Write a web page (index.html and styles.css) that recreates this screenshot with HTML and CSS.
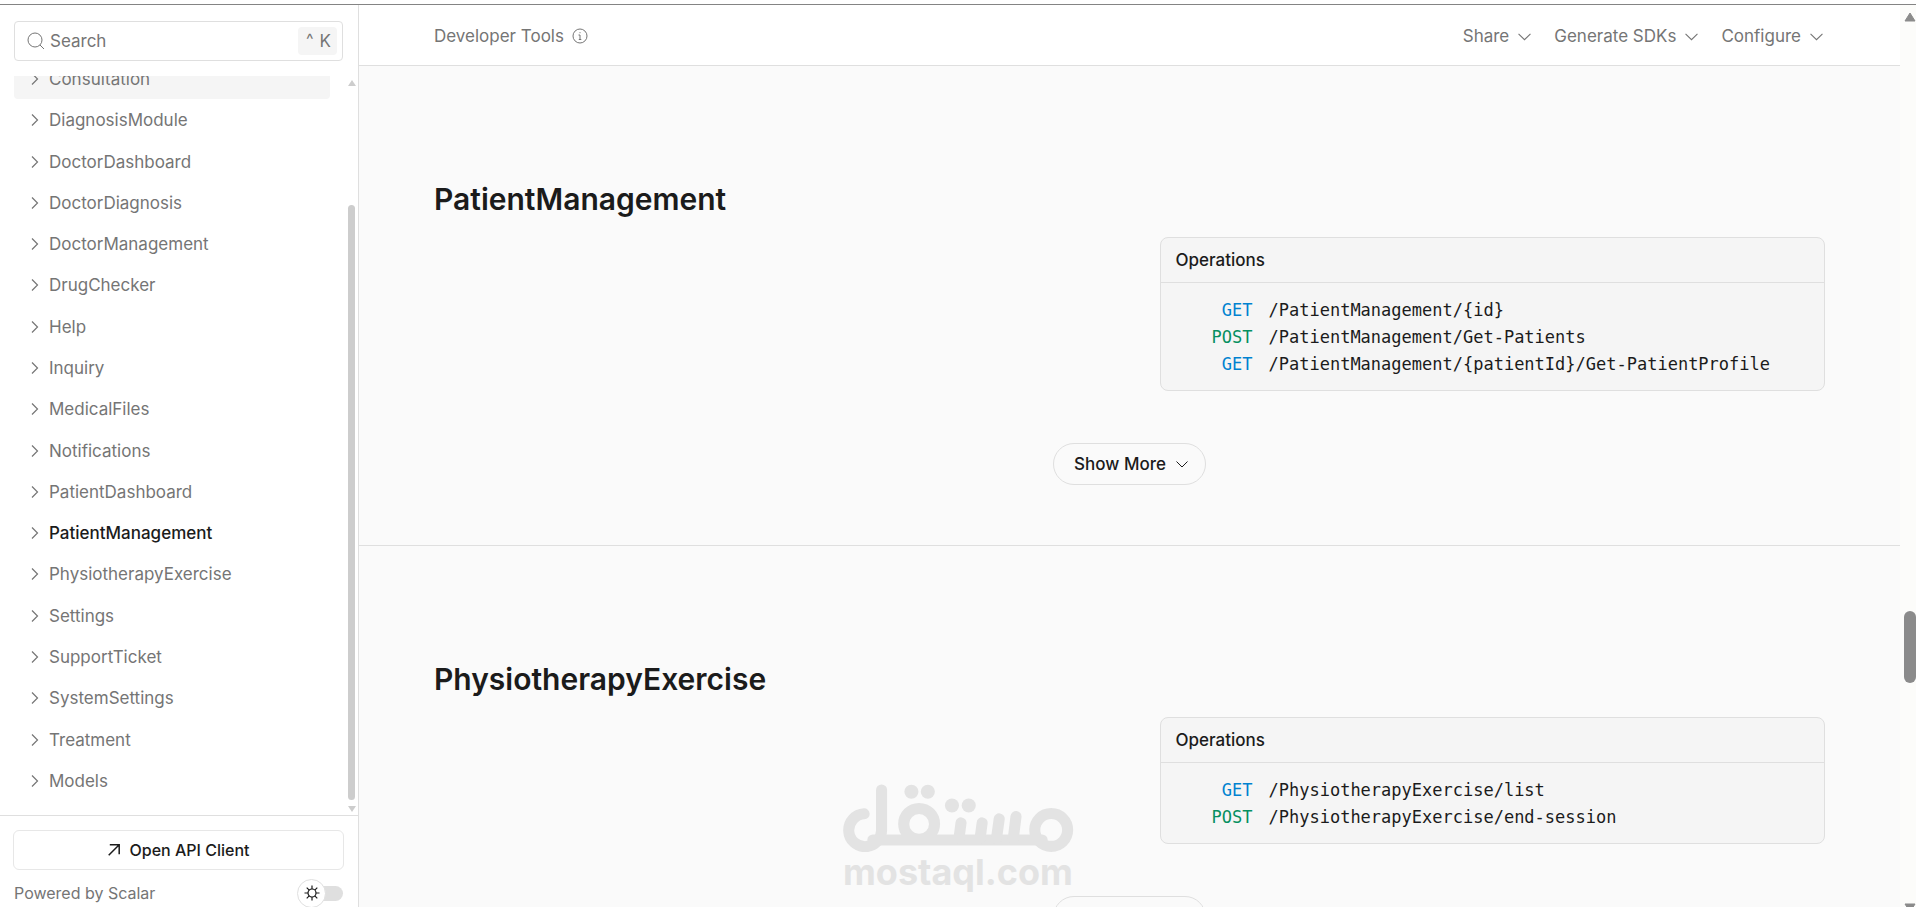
FILE: index.html
```
<!DOCTYPE html>
<html lang="en">
<head>
    <meta charset="UTF-8">
    <meta name="viewport" content="width=device-width, initial-scale=1.0">
    <title>API Reference</title>
    <link rel="stylesheet" href="styles.css">
</head>
<body>
    <!-- Shared icons -->
    <svg class="sprite" aria-hidden="true">
        <symbol id="chevron-right" viewBox="0 0 12 12"><path d="M3 .5l5.500 5.500L3 11.500"/></symbol>
        <symbol id="chevron-down" viewBox="0 0 12 12"><path d="M.5 3.500L6 9l5.500-5.500"/></symbol>
    </svg>

    <div class="layout">
        <aside class="sidebar">
            <div class="search">
                <svg class="search-icon" viewBox="0 0 18 18"><circle cx="8" cy="8" r="7"/><path d="M13 13l4 4"/></svg>
                <input type="text" id="search" placeholder="Search" aria-label="Search">
                <kbd><span class="caret">^</span>K</kbd>
            </div>

            <div class="nav-wrap">
                <nav>
                    <ul class="nav-list">
                        <li><a class="hovered" href="#consultation"><svg><use href="#chevron-right"/></svg>Consultation</a></li>
                        <li><a href="#diagnosis-module"><svg><use href="#chevron-right"/></svg>DiagnosisModule</a></li>
                        <li><a href="#doctor-dashboard"><svg><use href="#chevron-right"/></svg>DoctorDashboard</a></li>
                        <li><a href="#doctor-diagnosis"><svg><use href="#chevron-right"/></svg>DoctorDiagnosis</a></li>
                        <li><a href="#doctor-management"><svg><use href="#chevron-right"/></svg>DoctorManagement</a></li>
                        <li><a href="#drug-checker"><svg><use href="#chevron-right"/></svg>DrugChecker</a></li>
                        <li><a href="#help"><svg><use href="#chevron-right"/></svg>Help</a></li>
                        <li><a href="#inquiry"><svg><use href="#chevron-right"/></svg>Inquiry</a></li>
                        <li><a href="#medical-files"><svg><use href="#chevron-right"/></svg>MedicalFiles</a></li>
                        <li><a href="#notifications"><svg><use href="#chevron-right"/></svg>Notifications</a></li>
                        <li><a href="#patient-dashboard"><svg><use href="#chevron-right"/></svg>PatientDashboard</a></li>
                        <li><a class="active" href="#patient-management"><svg><use href="#chevron-right"/></svg>PatientManagement</a></li>
                        <li><a href="#physiotherapy-exercise"><svg><use href="#chevron-right"/></svg>PhysiotherapyExercise</a></li>
                        <li><a href="#settings"><svg><use href="#chevron-right"/></svg>Settings</a></li>
                        <li><a href="#support-ticket"><svg><use href="#chevron-right"/></svg>SupportTicket</a></li>
                        <li><a href="#system-settings"><svg><use href="#chevron-right"/></svg>SystemSettings</a></li>
                        <li><a href="#treatment"><svg><use href="#chevron-right"/></svg>Treatment</a></li>
                        <li><a href="#models"><svg><use href="#chevron-right"/></svg>Models</a></li>
                    </ul>
                </nav>
                <div class="nav-scroll">
                    <svg viewBox="0 0 8 6"><path d="M4 0l4 6H0z"/></svg>
                    <div class="nav-thumb"></div>
                    <svg viewBox="0 0 8 6"><path d="M4 6l4-6H0z"/></svg>
                </div>
            </div>

            <div class="sidebar-footer">
                <button type="button" class="client-btn">
                    <svg viewBox="0 0 12 12"><path d="M.7 11.300L11.200.8M1.800.8h9.400v9.400"/></svg>
                    Open API Client
                </button>
                <div class="footer-row">
                    <a href="#scalar">Powered by Scalar</a>
                    <label class="theme-toggle">
                        <input type="checkbox" aria-label="Dark mode">
                        <span class="knob">
                            <svg viewBox="0 0 16 16"><circle cx="8" cy="8" r="4"/><path d="M8 .5V4M8 12v3.500M.5 8H4M12 8h3.500M2.700 2.700l2.500 2.500M10.800 10.800l2.500 2.500M2.700 13.300l2.500-2.500M10.800 5.200l2.500-2.500"/></svg>
                        </span>
                    </label>
                </div>
            </div>
        </aside>

        <div class="main">
            <header class="toolbar">
                <div class="toolbar-title">
                    Developer Tools
                    <svg viewBox="0 0 16 16"><circle cx="8" cy="8" r="7"/><path d="M6.500 7H8v4.500M6.800 11.500h2.500M7.500 4.700h1"/></svg>
                </div>
                <div class="toolbar-menu">
                    <button type="button">Share <svg><use href="#chevron-down"/></svg></button>
                    <button type="button">Generate SDKs <svg><use href="#chevron-down"/></svg></button>
                    <button type="button">Configure <svg><use href="#chevron-down"/></svg></button>
                </div>
            </header>

            <main class="content">
                <section class="section" id="patient-management">
                    <h2>PatientManagement</h2>
                    <div class="columns">
                        <div class="card">
                            <h3>Operations</h3>
                            <ul class="operations">
                                <li><a href="#get-id"><span class="method get">GET</span>/PatientManagement/{id}</a></li>
                                <li><a href="#get-patients"><span class="method post">POST</span>/PatientManagement/Get-Patients</a></li>
                                <li><a href="#get-profile"><span class="method get">GET</span>/PatientManagement/{patientId}/Get-PatientProfile</a></li>
                            </ul>
                        </div>
                    </div>
                    <button type="button" class="show-more">Show More <svg><use href="#chevron-down"/></svg></button>
                </section>

                <section class="section" id="physiotherapy-exercise">
                    <h2>PhysiotherapyExercise</h2>
                    <div class="columns">
                        <div class="card">
                            <h3>Operations</h3>
                            <ul class="operations">
                                <li><a href="#list"><span class="method get">GET</span>/PhysiotherapyExercise/list</a></li>
                                <li><a href="#end-session"><span class="method post">POST</span>/PhysiotherapyExercise/end-session</a></li>
                            </ul>
                        </div>
                    </div>
                    <button type="button" class="show-more">Show More <svg><use href="#chevron-down"/></svg></button>
                </section>
            </main>
        </div>

        <div class="page-scroll">
            <svg viewBox="0 0 12 10"><path d="M6 1l5 8H1z"/></svg>
            <div class="space-before"></div>
            <div class="page-thumb"></div>
            <div class="space-after"></div>
            <svg viewBox="0 0 12 10"><path d="M6 9l5-8H1z"/></svg>
        </div>
    </div>

    <div class="watermark">
        <svg viewBox="68 68 692 204" role="img" aria-label="Mostaql logo">
            <g class="strokes">
                <circle cx="692" cy="205" r="49"/>
                <circle cx="298" cy="187" r="46"/>
                <path d="M134 157a49 49 0 1 0 52 48V86"/>
                <path d="M160 235H665"/>
                <path d="M423 184l-6 46M486 184l-6 46M537 172l-8 58M587 165l-8 65"/>
            </g>
            <circle cx="275" cy="91" r="21"/>
            <circle cx="324" cy="91" r="21"/>
            <circle cx="396" cy="132" r="21"/>
            <circle cx="446" cy="132" r="21"/>
        </svg>
        <span>mostaql.com</span>
    </div>
</body>
</html>
```
FILE: styles.css
```
* {
    box-sizing: border-box;
}
body {
    margin: 0;
    height: 100vh;
    padding-top: 4px;
    overflow: hidden;
    position: relative;
    font-family: Inter, sans-serif;
    font-size: 17px;
    line-height: 24px;
    color: #1b1b1b;
    background: #fff;
}
ul {
    list-style: none;
    margin: 0;
    padding: 0;
}
a {
    color: inherit;
    text-decoration: none;
}
button, input, kbd {
    font: inherit;
}
button {
    color: inherit;
    background: none;
    border: none;
    padding: 0;
    cursor: pointer;
}
svg {
    flex: none;
    fill: none;
    stroke: currentColor;
}
.sprite {
    display: none;
}
.layout {
    display: flex;
    height: 100%;
    border-top: 1px solid #848484;
}

/* Sidebar */
.sidebar {
    display: flex;
    flex-direction: column;
    width: 359px;
    flex: none;
    border-right: 1px solid #dfdfdf;
    color: #757575;
}
.search {
    display: flex;
    align-items: center;
    height: 40px;
    margin: 16px 15px 15px 14px;
    padding: 0 5px 0 12px;
    border: 1px solid #dfdfdf;
    border-radius: 4px;
}
.search-icon {
    width: 18px;
    height: 18px;
}
.search input {
    flex: 1;
    min-width: 0;
    padding: 0 5px;
    border: none;
    outline: none;
    background: none;
    color: #757575;
}
.search input::placeholder {
    color: #757575;
}
.search kbd {
    display: flex;
    gap: 6px;
    padding: 2px 6px 2px 8px;
    border-radius: 4px;
    background: #f5f5f5;
}
.caret {
    font-size: 16px;
    line-height: 20px;
}
.nav-wrap {
    display: flex;
    flex: 1;
    min-height: 0;
    overflow: hidden;
}
nav {
    flex: 1;
    display: flex;
    padding: 0 13px 14px 14px;
}
.nav-list {
    flex: 1;
    display: flex;
    flex-direction: column;
    justify-content: space-between;
    margin-top: -17px;
}
.nav-list a {
    display: flex;
    align-items: center;
    gap: 8px;
    height: 40px;
    padding-left: 15px;
    border-radius: 4px;
}
.nav-list svg {
    width: 12px;
    height: 12px;
    stroke-width: 1.2;
}
.nav-list .hovered {
    background: #f5f5f5;
}
.nav-list .active {
    color: #1b1b1b;
    font-weight: 500;
}
.nav-list .active svg {
    color: #757575;
}
.nav-scroll {
    display: flex;
    flex-direction: column;
    align-items: center;
    width: 15px;
    padding: 4px 0 3px 2px;
}
.nav-scroll svg {
    width: 8px;
    height: 6px;
    fill: #cdcdcd;
    stroke: none;
}
.nav-thumb {
    flex: 1;
    width: 7px;
    margin: 119px 0 6px;
    border-radius: 4px;
    background: #cdcdcd;
}
.sidebar-footer {
    padding: 14px 14px 0 13px;
    border-top: 1px solid #dfdfdf;
}
.client-btn {
    display: flex;
    align-items: center;
    justify-content: center;
    gap: 10px;
    width: 100%;
    height: 40px;
    border: 1px solid #e7e7e7;
    border-radius: 6px;
    color: #1b1b1b;
    font-size: 16px;
    font-weight: 500;
}
.client-btn svg {
    width: 12px;
    height: 12px;
    stroke-width: 1.5;
}
.footer-row {
    display: flex;
    align-items: center;
    justify-content: space-between;
    height: 37px;
    padding: 9px 1px 0;
    font-size: 16px;
}
.theme-toggle {
    position: relative;
    width: 43px;
    height: 15px;
    border-radius: 8px;
    background: #dfdfdf;
}
.theme-toggle input {
    position: absolute;
    inset: 0;
    margin: 0;
    opacity: 0;
}
.knob {
    position: absolute;
    left: -3px;
    top: -7px;
    display: flex;
    align-items: center;
    justify-content: center;
    width: 29px;
    height: 29px;
    border: 1px solid #dfdfdf;
    border-radius: 50%;
    background: #fff;
    color: #1b1b1b;
}
.knob svg {
    width: 16px;
    height: 16px;
    stroke-width: 1.2;
}

/* Main column */
.main {
    display: flex;
    flex-direction: column;
    flex: 1;
    min-width: 0;
}
.toolbar {
    display: flex;
    align-items: center;
    justify-content: space-between;
    flex: none;
    height: 61px;
    padding: 2px 77px 0 75px;
    border-bottom: 1px solid #dfdfdf;
    color: #757575;
}
.toolbar-title {
    display: flex;
    align-items: center;
    gap: 8px;
}
.toolbar-title svg {
    width: 16px;
    height: 16px;
}
.toolbar-menu {
    display: flex;
    gap: 23px;
}
.toolbar-menu button {
    display: flex;
    align-items: center;
    gap: 9px;
}
.toolbar-menu svg {
    width: 13px;
    height: 13px;
}
.content {
    flex: 1;
    min-height: 0;
    overflow: hidden;
    background: #fafafa;
}
.section {
    padding: 115px 75px 60px;
    border-bottom: 1px solid #dfdfdf;
}
.section h2 {
    margin: 0 0 20px;
    font-size: 30px;
    line-height: 36px;
    font-weight: 600;
}
.columns {
    display: grid;
    grid-template-columns: 1fr 1fr;
    gap: 60px;
}
.card {
    grid-column: 2;
    border: 1px solid #dfdfdf;
    border-radius: 8px;
    background: #f5f5f5;
}
.card h3 {
    margin: 0;
    padding: 10px 15px;
    border-bottom: 1px solid #dfdfdf;
    font-size: 17px;
    font-weight: 500;
}
.operations {
    padding: 14px 15px 12px;
    font-family: "DejaVu Sans Mono", monospace;
    line-height: 27px;
}
.operations a {
    display: flex;
    gap: 16px;
    white-space: nowrap;
}
.method {
    width: 77px;
    text-align: right;
}
.get {
    color: #0082d0;
}
.post {
    color: #069061;
}
.show-more {
    display: flex;
    align-items: center;
    gap: 10px;
    height: 42px;
    margin: 52px auto 0;
    padding: 0 17px 0 20px;
    border: 1px solid #dfdfdf;
    border-radius: 21px;
    font-weight: 500;
}
.show-more svg {
    width: 12px;
    height: 12px;
}

/* Page scrollbar */
.page-scroll {
    display: flex;
    flex-direction: column;
    align-items: flex-end;
    width: 16px;
    flex: none;
    padding-top: 7px;
    background: #fcfcfa;
}
.page-scroll svg {
    width: 12px;
    height: 10px;
    margin-bottom: -6px;
    fill: #8b8b8b;
    stroke: #8b8b8b;
    stroke-linejoin: round;
}
.space-before {
    flex: 595;
}
.page-thumb {
    flex: 72;
    width: 12px;
    border-radius: 6px;
    background: #8b8b8b;
}
.space-after {
    flex: 220;
}

/* Watermark over the page */
.watermark {
    position: absolute;
    left: 50%;
    bottom: 15px;
    transform: translateX(-50%);
    width: 232px;
    color: #e3e3e3;
    text-align: center;
    pointer-events: none;
}
.watermark svg {
    display: block;
    width: 100%;
    fill: currentColor;
    stroke: none;
}
.watermark .strokes {
    fill: none;
    stroke: currentColor;
    stroke-width: 33;
    stroke-linecap: round;
}
.watermark span {
    display: block;
    font-size: 36px;
    line-height: 40px;
    font-weight: 700;
}
```
